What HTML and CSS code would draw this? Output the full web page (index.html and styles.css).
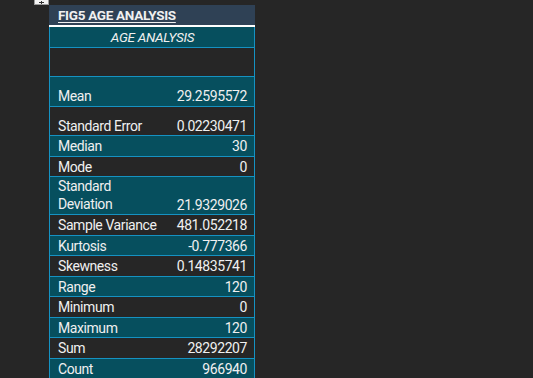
FILE: index.html
```html
<!DOCTYPE html>
<html>
<head>
<meta charset="utf-8">
<link rel="stylesheet" href="styles.css">
</head>
<body>
<div class="sheet">
  <div class="outline-btn"><svg width="13" height="4" viewBox="0 0 13 4"><path d="M4 1.5h5M6.5 0v3" stroke="#333" stroke-width="1" fill="none"/></svg></div>
  <div class="stats">
    <div class="head"><span class="head-text">FIG5 AGE ANALYSIS</span></div>
    <div class="row title">AGE ANALYSIS</div>
    <div class="row blank dark"></div>
    <div class="row tall teal"><span>Mean</span><span>29.2595572</span></div>
    <div class="row tall dark"><span>Standard Error</span><span>0.02230471</span></div>
    <div class="row teal"><span>Median</span><span>30</span></div>
    <div class="row dark"><span>Mode</span><span>0</span></div>
    <div class="row double teal"><span class="wrap">Standard<br>Deviation</span><span>21.9329026</span></div>
    <div class="row dark"><span>Sample Variance</span><span>481.052218</span></div>
    <div class="row teal"><span>Kurtosis</span><span>-0.777366</span></div>
    <div class="row dark"><span>Skewness</span><span>0.14835741</span></div>
    <div class="row teal"><span>Range</span><span>120</span></div>
    <div class="row dark"><span>Minimum</span><span>0</span></div>
    <div class="row teal"><span>Maximum</span><span>120</span></div>
    <div class="row dark"><span>Sum</span><span>28292207</span></div>
    <div class="row teal"><span>Count</span><span>966940</span></div>
  </div>
</div>
</body>
</html>
```
FILE: styles.css
```css
html, body {
  margin: 0;
  padding: 0;
  background: #262626;
  height: 100%;
  overflow: hidden;
}
.sheet {
  display: flex;
  align-items: flex-start;
  padding-left: 34px;
  font-family: Roboto, "Liberation Sans", sans-serif;
  color: #f0f0f0;
}
.outline-btn {
  width: 13px;
  height: 4px;
  background: #f4f4f4;
  border: 1px solid #9a9a9a;
  border-top: none;
  overflow: hidden;
  box-sizing: content-box;
  line-height: 0;
}
.stats {
  margin-top: 5px;
  width: 206px;
  display: flex;
  flex-direction: column;
}
.head {
  height: 20px;
  background: #2f4155;
  border-bottom: 2px solid #ffffff;
  padding-left: 9px;
  display: flex;
  align-items: flex-end;
}
.head-text {
  font-weight: bold;
  font-size: 13.5px;
  letter-spacing: -0.3px;
  line-height: 16px;
  text-decoration: underline;
  text-underline-offset: 2px;
  padding-bottom: 2px;
}
.row {
  box-sizing: border-box;
  height: 20.5px;
  border: 1px solid #1592c2;
  border-top: none;
  display: flex;
  justify-content: space-between;
  align-items: flex-end;
  padding: 0 7px 1.5px 8px;
  font-size: 14px;
  letter-spacing: -0.42px;
  line-height: 16px;
}
.title {
  height: 21px;
  background: #064f5e;
  justify-content: center;
  font-style: italic;
  font-size: 13.5px;
  letter-spacing: -0.3px;
  padding-bottom: 2px;
}
.blank { height: 29px; }
.tall { height: 29.5px; }
.double { height: 38px; }
.wrap { line-height: 18px; }
.teal { background: #064f5e; }
.dark { background: #262626; }
```
